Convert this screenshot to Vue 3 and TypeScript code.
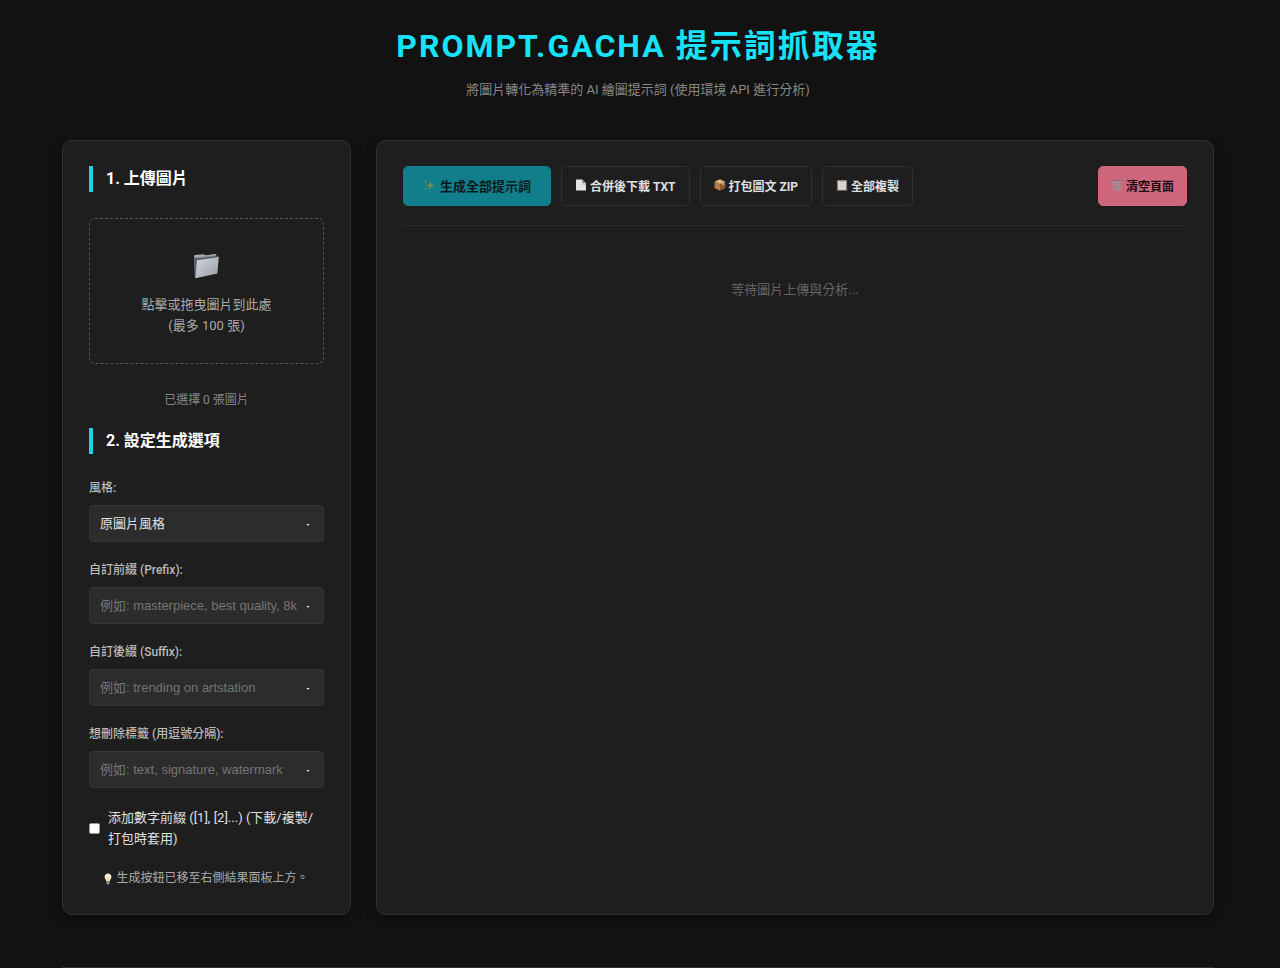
<script setup lang="ts">
import { ref } from 'vue'

interface TextField {
  id: string
  label: string
  placeholder: string
  options: string[]
}

const style = ref('原圖片風格')
const numbered = ref(false)
const count = ref(0)
const values = ref<Record<string, string>>({ prefix: '', suffix: '', remove: '' })

const fields: TextField[] = [
  { id: 'prefix', label: '自訂前綴 (Prefix):', placeholder: '例如: masterpiece, best quality, 8k', options: ['masterpiece', 'best quality', '8k'] },
  { id: 'suffix', label: '自訂後綴 (Suffix):', placeholder: '例如: trending on artstation', options: ['trending on artstation'] },
  { id: 'remove', label: '想刪除標籤 (用逗號分隔):', placeholder: '例如: text, signature, watermark', options: ['text', 'signature', 'watermark'] },
]

function onFiles(e: Event) {
  const files = (e.target as HTMLInputElement).files
  count.value = Math.min(files ? files.length : 0, 100)
}
</script>

<template>
  <div class="page">
    <header class="header">
      <h1>PROMPT.GACHA 提示詞抓取器</h1>
      <p>將圖片轉化為精準的 AI 繪圖提示詞 (使用環境 API 進行分析)</p>
    </header>

    <main class="layout">
      <section class="panel side">
        <h2>1. 上傳圖片</h2>
        <label class="drop" for="files">
          <svg class="folder" viewBox="0 0 26 26" aria-hidden="true">
            <defs>
              <linearGradient id="folderFront" x1="0" y1="0" x2="1" y2="1">
                <stop offset="0" stop-color="#d3d7dc" />
                <stop offset="1" stop-color="#989ea6" />
              </linearGradient>
            </defs>
            <path d="M0 3 1 2l9-.6 1.200 1.200L22 1l.6 2L22 20 1 25z" fill="#77808b" />
            <path d="M0 3 1 2l9-.6 1.200 1.200L22 1v1.200L1 4.400z" fill="#a9b0b8" />
            <path d="M.2 4.600 3 5.400v19.200L.8 25z" fill="#596470" />
            <path d="M3 7 24.800 3.800 23.400 20.600 1.400 25.200z" fill="url(#folderFront)" />
            <path d="M2.800 6.600 24.900 3.400" stroke="#414b57" stroke-width="1" fill="none" />
          </svg>
          <span>點擊或拖曳圖片到此處<br />(最多 100 張)</span>
          <input id="files" class="file" type="file" accept="image/*" multiple @change="onFiles" />
        </label>
        <p class="count">已選擇 {{ count }} 張圖片</p>

        <h2>2. 設定生成選項</h2>
        <div class="field">
          <label for="style">風格:</label>
          <div class="control">
            <select id="style" v-model="style">
              <option>原圖片風格</option>
              <option>動漫風格</option>
              <option>寫實風格</option>
            </select>
            <svg class="arrow" viewBox="0 0 4 4" aria-hidden="true"><path d="M.5 1h3L2.600 2.400H1.400z" /></svg>
          </div>
        </div>
        <div v-for="f in fields" :key="f.id" class="field">
          <label :for="f.id">{{ f.label }}</label>
          <div class="control">
            <input :id="f.id" v-model="values[f.id]" type="text" :placeholder="f.placeholder" :list="f.id + '-list'" />
            <datalist :id="f.id + '-list'">
              <option v-for="o in f.options" :key="o" :value="o" />
            </datalist>
            <svg class="arrow" viewBox="0 0 4 4" aria-hidden="true"><path d="M.5 1h3L2.600 2.400H1.400z" /></svg>
          </div>
        </div>

        <label class="check" for="numbered">
          <input id="numbered" v-model="numbered" type="checkbox" />
          <span>添加數字前綴 ([1], [2]...) (下載/複製/打包時套用)</span>
        </label>

        <p class="hint">
          <svg class="bulb" viewBox="0 0 8 12" aria-hidden="true">
            <path d="M4 .5C2 .5.6 1.900.6 3.700c0 1.800 1.300 2.600 1.800 4.700h3.200c.5-2.100 1.800-2.900 1.800-4.700C7.400 1.900 6 .5 4 .5z" fill="#fff0cf" />
            <path d="M3.200 4 3.700 8.200h.6L4.800 4" fill="none" stroke="#e5b763" stroke-width=".5" />
            <path d="M2.500 8.600h3v2L4.800 11.500H3.200l-.7-.9z" fill="#8f9190" />
          </svg>
          生成按鈕已移至右側結果面板上方。
        </p>
      </section>

      <section class="panel results">
        <div class="toolbar">
          <button type="button" class="btn primary">
            <svg class="ico" viewBox="0 0 12 12" aria-hidden="true">
              <path d="M7.200 2.200 8.300 5.200 11.600 6.400 8.300 7.600 7.200 10.800 6.100 7.600 2.900 6.400 6.100 5.200z" fill="#7f8a4c" />
              <path d="M2.400.8 2.900 2.200 4.300 2.700 2.900 3.200 2.400 4.600 1.900 3.200.5 2.700 1.900 2.200zM2.600 8.200 3 9.400 4.200 9.800 3 10.200 2.600 11.400 2.200 10.200 1 9.800 2.200 9.400z" fill="#7f8a4c" />
            </svg>
            生成全部提示詞
          </button>
          <button type="button" class="btn">
            <svg class="ico" viewBox="0 0 12 12" aria-hidden="true">
              <path d="M1 .5h6.200L11 4.300v7.200H1z" fill="#e4e4e4" />
              <path d="M7.200.5 11 4.300H7.200z" fill="#8d8d8d" />
              <path d="M6.500 5h4.500v1.500z" fill="#bbb" />
            </svg>
            合併後下載 TXT
          </button>
          <button type="button" class="btn">
            <svg class="ico" viewBox="0 0 12 12" aria-hidden="true">
              <path d="M.5 2.800 6 .3l5.500 2.500L6 5.500z" fill="#d1a175" />
              <path d="M.5 2.800 6 5.500v6.200L.5 9z" fill="#b77c4e" />
              <path d="M11.500 2.800 6 5.500v6.200L11.500 9z" fill="#8d5a36" />
              <path d="M2.700 1.800 8.500 4.300v2.200l1.300-.7V3.600L4.200 1.100z" fill="#e3c39f" />
            </svg>
            打包圖文 ZIP
          </button>
          <button type="button" class="btn">
            <svg class="ico" viewBox="0 0 12 12" aria-hidden="true">
              <path d="M.8 1h10.400v10.800H.8z" fill="#8d6b59" />
              <path d="M2 2h8v8.800H2z" fill="#dedede" />
              <path d="M3.800 1.300h1.300a1 1 0 0 1 1.800 0h1.300v1.500H3.800z" fill="#929292" />
              <path d="M3 4.500h6M3 6h6M3 7.500h6M3 9h6" stroke="#bcbcbc" stroke-width=".5" />
            </svg>
            全部複製
          </button>
          <button type="button" class="btn danger">
            <svg class="ico" viewBox="0 0 12 12" aria-hidden="true">
              <path d="M1 1.500h10L9.800 11.800H2.200z" fill="#b58593" />
              <path d="M2.500 2.500v8.500M4.200 2.500v9M6 2.500v9M7.800 2.500v9M9.500 2.500v8.500M1.500 4.500h9M1.900 7h8.200M2.100 9.400h7.800" stroke="#98808a" stroke-width=".5" />
              <path d="M.6.800h10.800v1.200H.6z" fill="#86747c" />
            </svg>
            清空頁面
          </button>
        </div>
        <p class="empty">等待圖片上傳與分析...</p>
      </section>
    </main>

    <footer class="footer"></footer>
  </div>
</template>

<style>
body {
  margin: 0;
  background: #121212;
}
</style>

<style scoped>
* {
  box-sizing: border-box;
}
.page {
  padding: 24px 66px 0 62px;
  font-family: Roboto, "Noto Sans CJK TC", sans-serif;
  font-size: 13px;
  line-height: 21px;
  color: #e0e0e0;
}
h1,
h2,
p {
  margin: 0;
}
.header {
  text-align: center;
  margin-bottom: 40px;
}
.header h1 {
  font-size: 32px;
  line-height: 44px;
  font-weight: 700;
  letter-spacing: 2px;
  color: #18e2f8;
}
.header p {
  margin-top: 11px;
  color: #888;
}
.layout {
  display: grid;
  grid-template-columns: 289px minmax(0, 1fr);
  gap: 25px;
}
.panel {
  background: #1e1e1e;
  border: 1px solid #303030;
  border-radius: 10px;
  padding: 25px 26px;
  box-shadow: 0 4px 12px rgba(0, 0, 0, 0.3);
}
h2 {
  border-left: 4px solid #22cfe3;
  padding-left: 13px;
  font-size: 16px;
  line-height: 26px;
  font-weight: 700;
  color: #fff;
}
.drop {
  display: flex;
  flex-direction: column;
  align-items: center;
  gap: 15px;
  margin-top: 26px;
  padding: 34px 12px 27px;
  border: 1px dashed #555;
  border-radius: 6px;
  text-align: center;
  color: #aaa;
  cursor: pointer;
}
.folder {
  width: 26px;
  height: 26px;
}
.file {
  position: absolute;
  width: 1px;
  height: 1px;
  opacity: 0;
}
.count {
  margin: 26px 0 17px;
  text-align: center;
  font-size: 12px;
  color: #888;
}
.field {
  margin-top: 19px;
}
h2 + .field {
  margin-top: 25px;
}
.field label {
  display: block;
  margin-bottom: 7px;
  font-size: 12px;
  line-height: 19px;
  font-weight: 500;
  color: #bbb;
}
.control {
  position: relative;
}
.control select,
.control input {
  display: block;
  width: 100%;
  height: 37px;
  margin: 0;
  padding: 0 20px 0 10px;
  appearance: none;
  background: #2c2c2c;
  border: 1px solid #363636;
  border-radius: 4px;
  font-family: "Liberation Sans", "Noto Sans CJK TC", sans-serif;
  font-size: 13px;
  color: #e0e0e0;
}
.control input::placeholder {
  color: #757575;
  opacity: 1;
}
.control input::-webkit-calendar-picker-indicator {
  display: none !important;
}
.arrow {
  position: absolute;
  right: 14px;
  top: 18px;
  width: 4px;
  height: 4px;
  fill: #e0e0e0;
  pointer-events: none;
}
.check {
  display: flex;
  align-items: center;
  gap: 8px;
  margin-top: 19px;
}
.check input {
  flex: none;
  width: 11px;
  height: 11px;
  margin: 0;
  appearance: none;
  background: #fff;
  border: 1px solid #999;
  border-radius: 2px;
}
.check input:checked {
  background: #18e2f8;
}
.hint {
  display: flex;
  align-items: center;
  justify-content: center;
  gap: 4px;
  margin-top: 19px;
  font-size: 12px;
  color: #aaa;
}
.bulb {
  width: 8px;
  height: 12px;
}
.toolbar {
  display: flex;
  align-items: center;
  gap: 10px;
  padding-bottom: 19px;
  border-bottom: 1px solid #2d2d2d;
}
.btn {
  display: flex;
  align-items: center;
  justify-content: center;
  gap: 3px;
  height: 40px;
  padding: 0 13px 2px;
  background: transparent;
  border: 1px solid #303030;
  border-radius: 5px;
  font-family: inherit;
  font-size: 12px;
  font-weight: 700;
  color: #e0e0e0;
  white-space: nowrap;
}
.primary {
  padding: 0 19px 2px;
  gap: 5px;
  background: #117f8b;
  border-color: #117f8b;
  font-size: 13px;
  color: #0a1a1c;
}
.danger {
  margin-left: auto;
  padding: 0 12px 2px;
  background: #cf667c;
  border-color: #cf667c;
  color: #190c0f;
}
.ico {
  width: 12px;
  height: 12px;
}
.empty {
  margin-top: 53px;
  text-align: center;
  color: #666;
}
.footer {
  margin-top: 52px;
  height: 1px;
  background: #303030;
}
</style>
